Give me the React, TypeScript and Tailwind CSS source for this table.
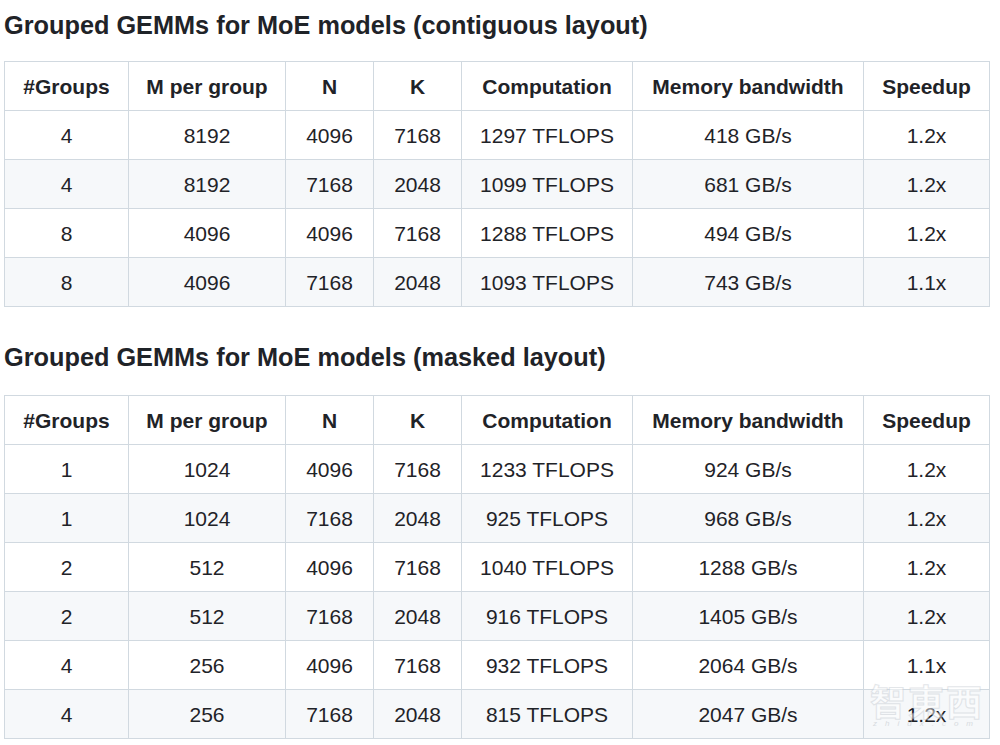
import React from "react";

const cols = ["#Groups", "M per group", "N", "K", "Computation", "Memory bandwidth", "Speedup"];
const widths = ["w-[124px]", "w-[157px]", "w-[88px]", "w-[88px]", "w-[171px]", "w-[231px]", "w-[126px]"];

const t1 = [
  ["4", "8192", "4096", "7168", "1297 TFLOPS", "418 GB/s", "1.2x"],
  ["4", "8192", "7168", "2048", "1099 TFLOPS", "681 GB/s", "1.2x"],
  ["8", "4096", "4096", "7168", "1288 TFLOPS", "494 GB/s", "1.2x"],
  ["8", "4096", "7168", "2048", "1093 TFLOPS", "743 GB/s", "1.1x"],
];

const t2 = [
  ["1", "1024", "4096", "7168", "1233 TFLOPS", "924 GB/s", "1.2x"],
  ["1", "1024", "7168", "2048", "925 TFLOPS", "968 GB/s", "1.2x"],
  ["2", "512", "4096", "7168", "1040 TFLOPS", "1288 GB/s", "1.2x"],
  ["2", "512", "7168", "2048", "916 TFLOPS", "1405 GB/s", "1.2x"],
  ["4", "256", "4096", "7168", "932 TFLOPS", "2064 GB/s", "1.1x"],
  ["4", "256", "7168", "2048", "815 TFLOPS", "2047 GB/s", "1.2x"],
];

function Table({ rows }: { rows: string[][] }) {
  return (
    <table className="border-collapse w-[985px] table-fixed">
      <colgroup>
        {widths.map((w, i) => (
          <col key={i} className={w} />
        ))}
      </colgroup>
      <thead>
        <tr className="bg-white">
          {cols.map((c) => (
            <th
              key={c}
              className="border border-[#d1d9e0] h-[49px] p-0 pt-[1px] text-center font-bold text-[21px] leading-[32px] text-[#1f2328]"
            >
              {c}
            </th>
          ))}
        </tr>
      </thead>
      <tbody>
        {rows.map((r, i) => (
          <tr key={i} className={i % 2 === 1 ? "bg-[#f6f8fa]" : "bg-white"}>
            {r.map((v, j) => (
              <td
                key={j}
                className="border border-[#d1d9e0] h-[49px] p-0 pt-[1px] text-center text-[21px] leading-[32px] text-[#1f2328]"
              >
                {v}
              </td>
            ))}
          </tr>
        ))}
      </tbody>
    </table>
  );
}

export default function App() {
  return (
    <div
      className="relative w-[1000px] h-[745px] bg-white overflow-hidden pl-[4px]"
      style={{ fontFamily: '"Liberation Sans", Arial, sans-serif' }}
    >
      <h3 className="pt-[8px] text-[25.3px] leading-[34px] font-bold text-[#1f2328]">
        Grouped GEMMs for MoE models (contiguous layout)
      </h3>
      <div className="mt-[19px]">
        <Table rows={t1} />
      </div>
      <h3 className="mt-[33px] text-[25.3px] leading-[34px] font-bold text-[#1f2328]">
        Grouped GEMMs for MoE models (masked layout)
      </h3>
      <div className="mt-[21px]">
        <Table rows={t2} />
      </div>
      <div className="absolute left-[870px] top-[681px] flex flex-col items-center pointer-events-none opacity-50">
        <span
          className="text-[36px] leading-[38px] font-bold text-white tracking-[2px]"
          style={{
            fontFamily: '"Noto Sans CJK TC", "Noto Sans CJK SC", sans-serif',
            WebkitTextStroke: "1px #c9ced4",
          }}
        >
          智東西
        </span>
        <span className="text-[8px] leading-[10px] italic text-[#b8bec5] tracking-[8px]">zhidx.com</span>
      </div>
    </div>
  );
}
